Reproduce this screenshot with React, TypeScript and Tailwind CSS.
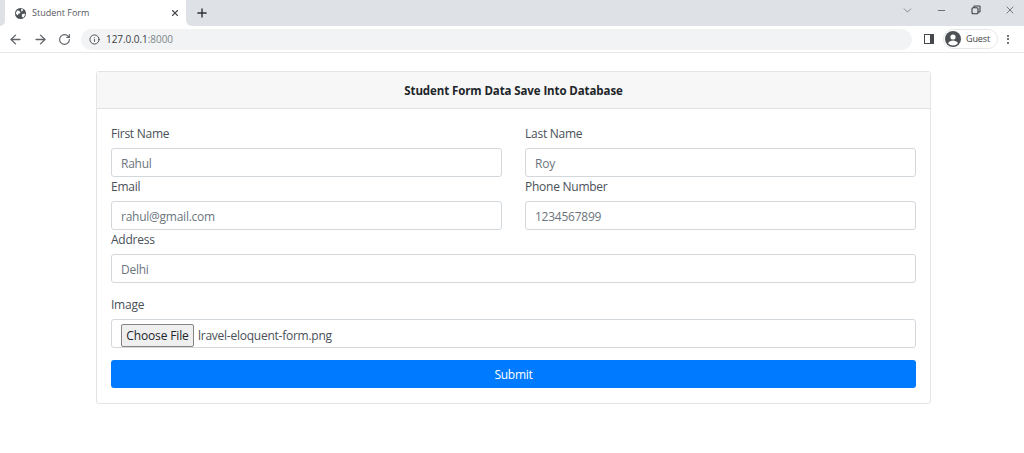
import React from "react";
import {
  ArrowLeft,
  ArrowRight,
  ChevronDown,
  Info,
  Minus,
  Plus,
  RotateCw,
  X,
} from "lucide-react";

function GlobeIcon() {
  return (
    <svg viewBox="0 0 16 16" className="h-[11px] w-[11px]">
      <circle cx="8" cy="8" r="8" fill="#4d5156" />
      <path
        d="M3 3.5l3 .5 2 2-1 2-2 .5-1 2.5-3-3zM9 1l3 1-1 2.5-2 .5zM10 9l4-1 .5 2-2.5 4-2-1.5z"
        fill="#fff"
      />
    </svg>
  );
}

function Chrome() {
  return (
    <div className="shrink-0 tracking-normal">
      <div className="flex h-[26px] bg-white">
        <div className="w-[5px] rounded-br-[5px] bg-[#dee1e6]" />
        <div className="flex w-[181px] items-center bg-white pl-[10px] pr-[6px] text-[#55585d]">
          <GlobeIcon />
          <span className="ml-[6px] flex-1 text-[9px]">Student Form</span>
          <X className="h-[10px] w-[10px] text-[#45494e]" strokeWidth={2.6} />
        </div>
        <div className="flex flex-1 items-center rounded-bl-[6px] bg-[#dee1e6]">
          <Plus className="ml-[9px] h-[14px] w-[14px] text-[#303236]" strokeWidth={2.4} />
          <div className="flex-1" />
          <div className="mb-[6px] flex items-center text-[#55585d]">
            <ChevronDown className="h-[13px] w-[13px]" strokeWidth={1.2} />
            <Minus className="ml-[22px] h-[11px] w-[11px] text-[#3a3c40]" strokeWidth={1.5} />
            <svg viewBox="0 0 10 10" className="ml-[24px] h-[10px] w-[10px]" fill="none" stroke="#3a3c40" strokeWidth="1.1">
              <rect x="1" y="2.8" width="6" height="6" rx="1" />
              <path d="M3 2.8V1.6a.6.6 0 0 1 .6-.6h4.8a.6.6 0 0 1 .6.6v4.8a.6.6 0 0 1-.6.6H7" />
            </svg>
            <X className="ml-[23px] mr-[8px] h-[12px] w-[12px] text-[#3a3c40]" strokeWidth={1.3} />
          </div>
        </div>
      </div>
      <div className="flex h-[27px] items-center border-b border-[#e6e7e9] bg-white text-[#5f6368]">
        <ArrowLeft className="ml-[8px] h-[15px] w-[15px]" strokeWidth={2.1} />
        <ArrowRight className="ml-[10px] h-[15px] w-[15px]" strokeWidth={2.1} />
        <RotateCw className="ml-[10px] h-[13px] w-[13px]" strokeWidth={2.1} />
        <div className="ml-[10px] flex h-[21px] w-[831px] items-center rounded-full bg-[#f1f3f4] pl-[8px]">
          <Info className="h-[11px] w-[11px] text-[#45494e]" strokeWidth={2} />
          <span className="ml-[6px] text-[10px] tracking-[-0.05px] text-[#3c4043]">
            127.0.0.1<span className="text-[#80868b]">:8000</span>
          </span>
        </div>
        <span className="ml-[12px] flex h-[10px] w-[10px] justify-end border-[1.5px] border-[#45494e]">
          <span className="h-full w-[3px] bg-[#45494e]" />
        </span>
        <div className="ml-[9px] flex h-[20px] w-[55px] items-center rounded-full border border-[#e6e7e9] pl-[1px]">
          <svg viewBox="0 0 16 16" className="h-[16px] w-[16px]">
            <circle cx="8" cy="8" r="8" fill="#4d5156" />
            <circle cx="8" cy="6" r="2.6" fill="#fff" />
            <path d="M3 12.2c1-2 3-2.8 5-2.8s4 .8 5 2.8A6.5 6.5 0 0 1 8 14.5a6.5 6.5 0 0 1-5-2.3z" fill="#fff" />
          </svg>
          <span className="ml-[5px] text-[9px] tracking-[-0.1px] text-[#3c4043]">Guest</span>
        </div>
        <div className="ml-[9px] flex flex-col gap-[1.5px]">
          <span className="h-[2px] w-[2px] rounded-full bg-[#45494e]" />
          <span className="h-[2px] w-[2px] rounded-full bg-[#45494e]" />
          <span className="h-[2px] w-[2px] rounded-full bg-[#45494e]" />
        </div>
      </div>
    </div>
  );
}

function Field({ label, value }: { label: string; value: string }) {
  return (
    <div className="flex-1">
      <div className="flex h-[20px] items-center text-[#495057]">{label}</div>
      <div className="mt-[4px] flex h-[29px] items-center rounded-[3px] border border-[#d3d8dd] pl-[9px] pt-[2px] text-[#6c757d]">
        {value}
      </div>
    </div>
  );
}

export default function App() {
  return (
    <div className="flex h-[453px] w-[1024px] flex-col overflow-hidden bg-white font-['Open_Sans','Noto_Sans',sans-serif] text-[12px] tracking-[-0.25px]">
      <Chrome />
      <div className="ml-[96px] mt-[18px] w-[835px] rounded-[3px] border border-[#e4e4e4]">
        <div className="flex h-[37px] items-center justify-center border-b border-[#e2e2e2] bg-[#f7f7f7] pt-[1px] text-[11.5px] font-bold tracking-[-0.1px] text-[#212529]">
          Student Form Data Save Into Database
        </div>
        <div className="px-[14px] pt-[15px] pb-[15px]">
          <div className="flex gap-[23px]">
            <Field label="First Name" value="Rahul" />
            <Field label="Last Name" value="Roy" />
          </div>
          <div className="flex gap-[23px]">
            <Field label="Email" value="rahul@gmail.com" />
            <Field label="Phone Number" value="1234567899" />
          </div>
          <div>
            <Field label="Address" value="Delhi" />
          </div>
          <div className="mt-[12px] flex h-[20px] items-center text-[#495057]">Image</div>
          <div className="mt-[4px] flex h-[29px] items-end rounded-[3px] border border-[#d3d8dd] pl-[9px] text-[#495057]">
            <div className="flex h-[23px] items-center">
              <div className="flex h-[23px] w-[73px] items-center justify-center rounded-[2px] border border-[#858585] bg-[#efefef] tracking-[-0.15px] text-[#212529]">
                Choose File
              </div>
              <span className="ml-[4px]">lravel-eloquent-form.png</span>
            </div>
          </div>
          <div className="mt-[12px] flex h-[28px] items-center justify-center rounded-[3px] bg-[#007bff] pt-[1px] text-white">
            Submit
          </div>
        </div>
      </div>
    </div>
  );
}
